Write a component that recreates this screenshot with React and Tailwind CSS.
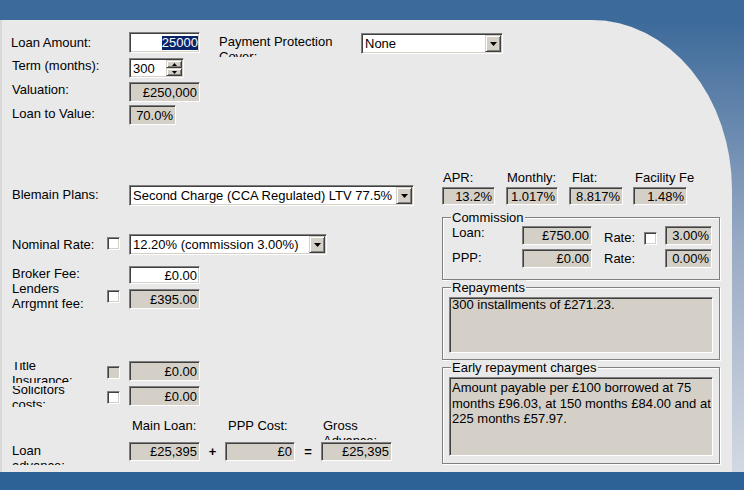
import React from 'react';

// classic win32 3D borders
const SUNKEN = 'border border-t-[#808080] border-l-[#808080] border-b-white border-r-white shadow-[inset_1px_1px_0_#404040,inset_-1px_-1px_0_#d4d0c8]';
const RAISED = 'border border-t-[#d4d0c8] border-l-[#d4d0c8] border-b-[#404040] border-r-[#404040] shadow-[inset_1px_1px_0_#ffffff,inset_-1px_-1px_0_#808080] bg-[#d4d0c8]';

function Field({ cls = '', white, children }) {
  return (
    <div className={`${SUNKEN} ${white ? 'bg-white' : 'bg-[#d4d0c8]'} shrink-0 flex items-center justify-end pr-[2px] whitespace-nowrap overflow-hidden ${cls}`}>
      {children}
    </div>
  );
}

function Check({ disabled, cls = '' }) {
  return <div className={`${SUNKEN} ${disabled ? 'bg-[#d4d0c8]' : 'bg-white'} w-[13px] h-[13px] shrink-0 ${cls}`} />;
}

function Arrow({ up, w = 7, h = 4 }) {
  return (
    <svg width={w} height={h} viewBox={`0 0 ${w} ${h}`}>
      <path d={up ? `M${w / 2} 0L${w} ${h}H0z` : `M0 0H${w}L${w / 2} ${h}z`} fill="#000" />
    </svg>
  );
}

function Select({ cls = '', children }) {
  return (
    <div className={`${SUNKEN} bg-white shrink-0 flex items-center pr-[1px] ${cls}`}>
      <span className="flex-1 min-w-0 overflow-hidden whitespace-nowrap pl-[3px]">{children}</span>
      <div className={`${RAISED} w-[16px] h-[17px] shrink-0 flex items-center justify-center`}>
        <Arrow />
      </div>
    </div>
  );
}

function Group({ title, cls = '', children }) {
  return (
    <div className={`relative border border-[#808080] shadow-[1px_1px_0_#ffffff,inset_1px_1px_0_#ffffff] ${cls}`}>
      <span className="absolute -top-[8px] left-[8px] bg-[#e9e9e9] px-[1px] whitespace-nowrap">{title}</span>
      {children}
    </div>
  );
}

export default function App() {
  return (
    <div className="w-[744px] h-[490px] flex flex-col overflow-hidden font-['Liberation_Sans',Arial,sans-serif] text-[13px] leading-[15px] text-black">
      <div className="h-[20px] shrink-0 bg-[#3c6a9a]" />

      <div className="flex-1 flex bg-linear-to-b from-[#3c6a9a] via-[#9aabc5] to-[#d3d9e3]">
        <div className="w-[732px] h-full bg-[#e9e9e9] rounded-tr-[140px_170px] shadow-[inset_2px_0_0_#d8d8d8] flex flex-col">

          {/* top block */}
          <div className="flex pt-[12px]">
            <div className="flex flex-col">
              <div className="flex h-[21px]">
                <div className="w-[129px] pl-[11px] pt-[3px]">Loan Amount:</div>
                <Field white cls="w-[71px] h-[21px] !pr-[1px]">
                  <span className="bg-[#0a246a] text-white leading-[14px]">25000</span>
                </Field>
              </div>
              <div className="flex h-[20px] mt-[5px]">
                <div className="w-[129px] pl-[12px]">Term (months):</div>
                <div className={`${SUNKEN} bg-white w-[55px] h-[20px] flex items-center`}>
                  <span className="flex-1 pl-[3px]">300</span>
                  <div className="flex flex-col self-stretch w-[16px] mr-[1px] py-[1px]">
                    <div className={`${RAISED} flex-1 flex items-center justify-center`}>
                      <Arrow up w={5} h={3} />
                    </div>
                    <div className={`${RAISED} flex-1 flex items-center justify-center`}>
                      <Arrow w={5} h={3} />
                    </div>
                  </div>
                </div>
              </div>
              <div className="flex h-[20px] mt-[4px]">
                <div className="w-[129px] pl-[12px]">Valuation:</div>
                <Field cls="w-[71px] h-[20px]">£250,000</Field>
              </div>
              <div className="flex h-[20px] mt-[3px]">
                <div className="w-[129px] pl-[12px] pt-[1px]">Loan to Value:</div>
                <Field cls="w-[47px] h-[20px]">70.0%</Field>
              </div>
            </div>
            <div className="ml-[19px] w-[142px] h-[25px] overflow-hidden pt-[2px]">
              Payment Protection<br />Cover:
            </div>
            <Select cls="w-[142px] h-[21px] mt-[1px]">None</Select>
          </div>

          {/* lower block */}
          <div className="flex">
            <div className="w-[442px] flex flex-col">
              <div className="flex mt-[60px] h-[21px]">
                <div className="w-[129px] pl-[12px] pt-[2px]">Blemain Plans:</div>
                <Select cls="w-[285px] h-[21px]">Second Charge (CCA Regulated) LTV 77.5%</Select>
              </div>

              <div className="flex mt-[28px] h-[21px]">
                <div className="w-[107px] pl-[12px] pt-[3px] whitespace-nowrap">Nominal Rate:</div>
                <div className="w-[22px] shrink-0"><Check cls="mt-[3px]" /></div>
                <Select cls="w-[198px] h-[21px]">12.20% (commission 3.00%)</Select>
              </div>

              <div className="flex mt-[11px] h-[18px]">
                <div className="w-[129px] pl-[12px]">Broker Fee:</div>
                <Field white cls="w-[71px] h-[18px]">£0.00</Field>
              </div>

              <div className="flex mt-[5px] h-[20px]">
                <div className="w-[107px] pl-[12px] -mt-[8px]">Lenders<br />Arrgmnt fee:</div>
                <div className="w-[22px] shrink-0"><Check cls="mt-[1px]" /></div>
                <Field cls="w-[71px] h-[20px]">£395.00</Field>
              </div>

              <div className="flex mt-[52px] h-[20px]">
                <div className="w-[107px] pl-[12px] h-[21px] mt-[1px] overflow-hidden">
                  <div className="-mt-[4px]">Title<br />Insurance:</div>
                </div>
                <div className="w-[22px] shrink-0"><Check disabled cls="mt-[5px]" /></div>
                <Field cls="w-[71px] h-[20px]">£0.00</Field>
              </div>

              <div className="flex mt-[5px] h-[20px]">
                <div className="w-[107px] pl-[12px] h-[21px] overflow-hidden">
                  <div className="-mt-[4px]">Solicitors<br />costs:</div>
                </div>
                <div className="w-[22px] shrink-0"><Check cls="mt-[5px]" /></div>
                <Field cls="w-[71px] h-[20px]">£0.00</Field>
              </div>

              <div className="flex mt-[12px] h-[22px] overflow-hidden">
                <div className="w-[129px] shrink-0" />
                <div className="w-[96px] pl-[3px] whitespace-nowrap">Main Loan:</div>
                <div className="w-[96px] pl-[3px] whitespace-nowrap">PPP Cost:</div>
                <div className="w-[71px] pl-[2px]">Gross<br />Advance:</div>
              </div>

              <div className="flex items-start mt-[2px]">
                <div className="w-[129px] pl-[12px] h-[23px] overflow-hidden shrink-0">
                  <div className="pt-[1px]">Loan<br />advance:</div>
                </div>
                <Field cls="w-[71px] h-[19px]">£25,395</Field>
                <div className="w-[25px] h-[19px] flex items-center justify-center font-bold">+</div>
                <Field cls="w-[70px] h-[19px]">£0</Field>
                <div className="w-[26px] h-[19px] flex items-center justify-center font-bold">=</div>
                <Field cls="w-[71px] h-[19px]">£25,395</Field>
              </div>
            </div>

            <div className="w-[278px] flex flex-col pt-[45px]">
              <div className="flex h-[15px]">
                <div className="w-[64px] pl-[1px]">APR:</div>
                <div className="w-[63px] pl-[1px]">Monthly:</div>
                <div className="w-[64px] pl-[3px]">Flat:</div>
                <div className="w-[64px] pl-[2px] whitespace-nowrap overflow-hidden">Facility Fe</div>
              </div>
              <div className="flex mt-[2px]">
                <Field cls="w-[53px] h-[18px]">13.2%</Field>
                <Field cls="w-[52px] h-[18px] ml-[11px]">1.017%</Field>
                <Field cls="w-[54px] h-[18px] ml-[11px]">8.817%</Field>
                <Field cls="w-[54px] h-[18px] ml-[10px]">1.48%</Field>
              </div>

              <Group title="Commission" cls="mt-[12px] h-[63px] pt-[8px] pl-[9px]">
                <div className="flex items-start h-[19px]">
                  <div className="w-[70px] -mt-[1px]">Loan:</div>
                  <Field cls="w-[70px] h-[19px]">£750.00</Field>
                  <div className="w-[40px] ml-[12px] mt-[4px]">Rate:</div>
                  <Check cls="mt-[6px]" />
                  <Field cls="w-[47px] h-[19px] ml-[8px]">3.00%</Field>
                </div>
                <div className="flex items-start h-[19px] mt-[4px]">
                  <div className="w-[70px] mt-[1px]">PPP:</div>
                  <Field cls="w-[70px] h-[19px]">£0.00</Field>
                  <div className="w-[61px] ml-[12px] mt-[2px]">Rate:</div>
                  <Field cls="w-[47px] h-[19px]">0.00%</Field>
                </div>
              </Group>

              <Group title="Repayments" cls="mt-[7px] h-[73px] pt-[9px] pl-[6px]">
                <div className={`${SUNKEN} bg-[#d4d0c8] w-[264px] h-[56px] pl-[2px] leading-[14px]`}>
                  300 installments of £271.23.
                </div>
              </Group>

              <Group title="Early repayment charges" cls="mt-[7px] h-[97px] pt-[9px] pl-[6px]">
                <div className={`${SUNKEN} bg-[#d4d0c8] w-[264px] h-[79px] pl-[2px] pt-[2px] leading-[15.5px]`}>
                  Amount payable per £100 borrowed at 75<br />
                  months £96.03, at 150 months £84.00 and at<br />
                  225 months £57.97.
                </div>
              </Group>
            </div>
          </div>
        </div>
      </div>

      <div className="h-[18px] shrink-0 bg-[#2c6295]" />
    </div>
  );
}
